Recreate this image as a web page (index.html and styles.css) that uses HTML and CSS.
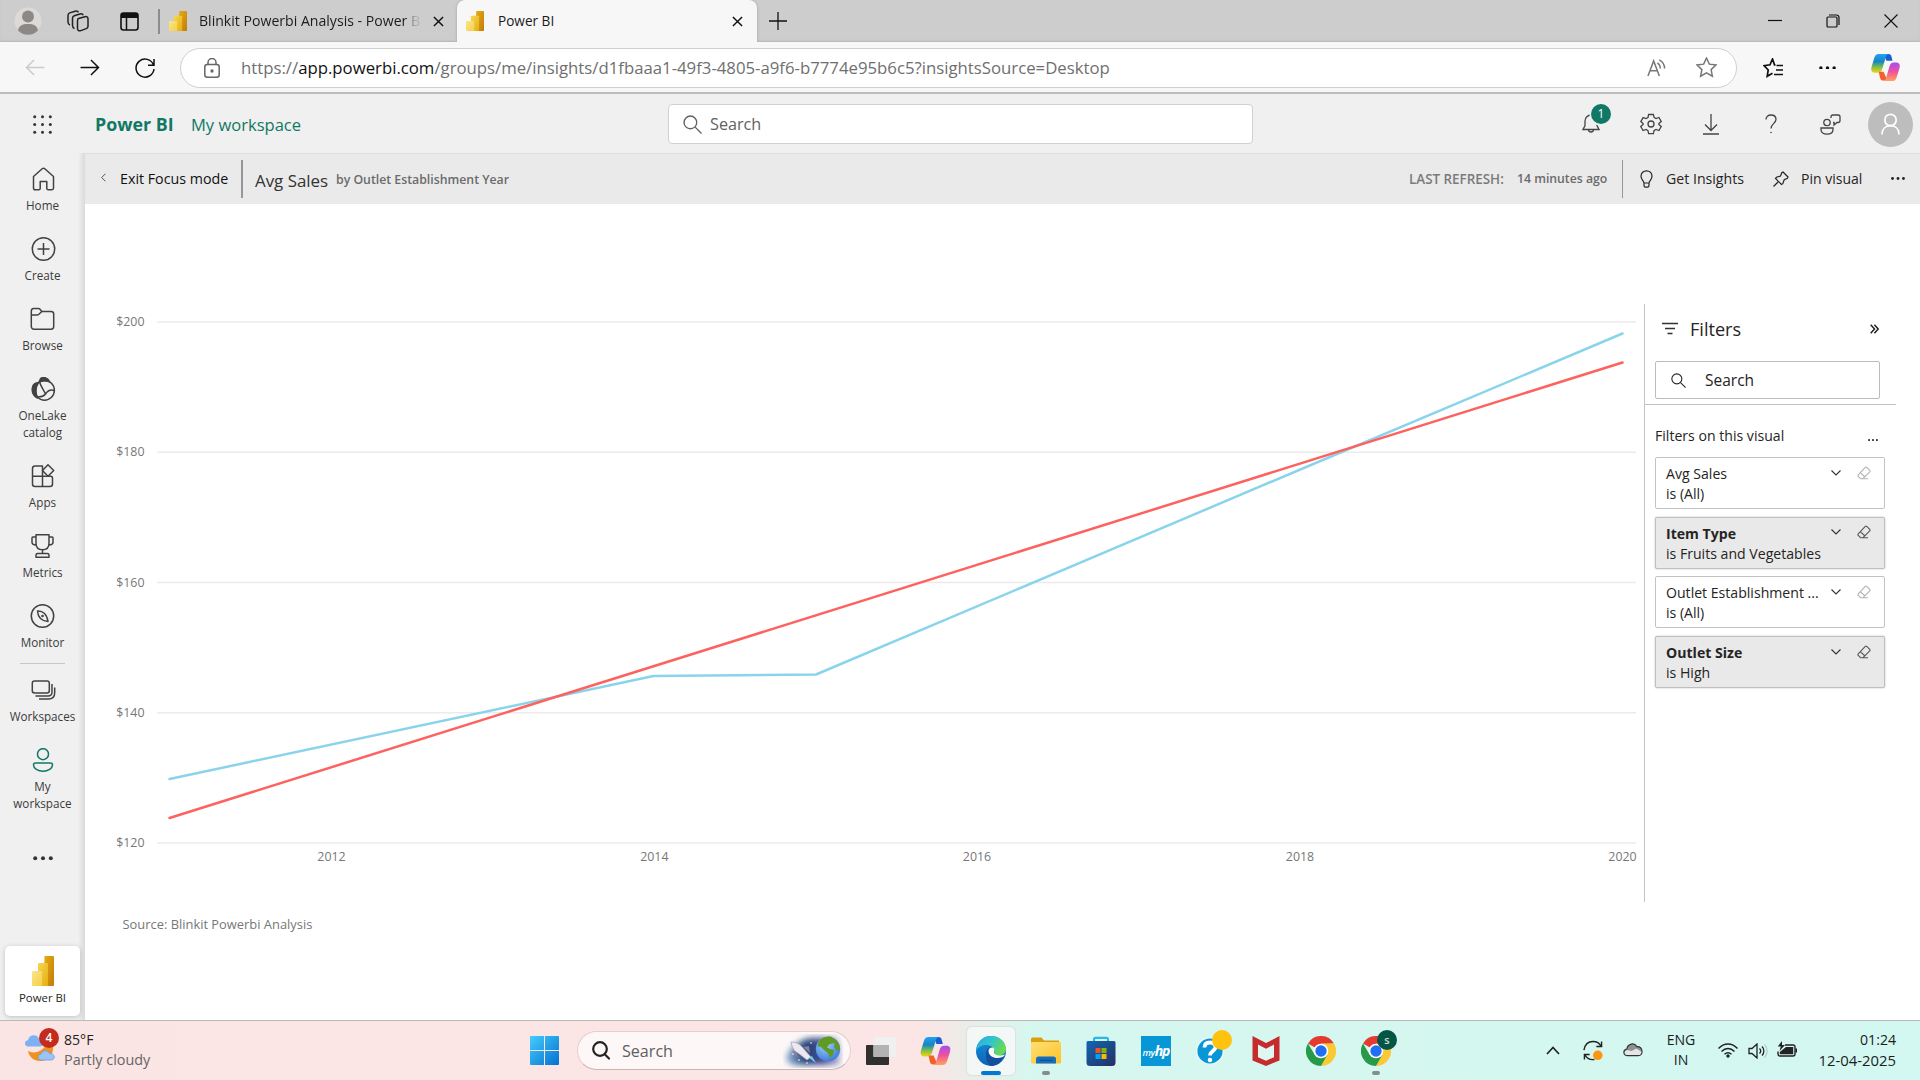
FILE: index.html
```html
<!DOCTYPE html>
<html lang="en">
<head>
<meta charset="utf-8">
<title>Power BI</title>
<link rel="stylesheet" href="styles.css">
</head>
<body>
<svg class="defs" width="0" height="0" aria-hidden="true">
  <defs>
    <linearGradient id="bar3" x1="0" y1="0" x2="1" y2="1"><stop offset="0" stop-color="#e6ad10"/><stop offset="1" stop-color="#c27b0b"/></linearGradient>
    <linearGradient id="bar2" x1="0" y1="0" x2="1" y2="1"><stop offset="0" stop-color="#f6d751"/><stop offset="1" stop-color="#e6ad10"/></linearGradient>
    <linearGradient id="bar1" x1="0" y1="0" x2="1" y2="1"><stop offset="0" stop-color="#f9e589"/><stop offset="1" stop-color="#f4d04b"/></linearGradient>
    <linearGradient id="cpLeft" x1="0" y1="0" x2="0" y2="1"><stop offset="0" stop-color="#1fa3f2"/><stop offset=".4" stop-color="#1785c4"/><stop offset=".7" stop-color="#7fbf4a"/><stop offset="1" stop-color="#f8d30c"/></linearGradient>
    <linearGradient id="cpRight" x1="0" y1="0" x2="0" y2="1"><stop offset="0" stop-color="#a44ef0"/><stop offset=".5" stop-color="#f0529c"/><stop offset="1" stop-color="#ffa35c"/></linearGradient>
    <linearGradient id="edgeTop" x1="0" y1="0" x2="1" y2=".5"><stop offset="0" stop-color="#2ba9e4"/><stop offset=".5" stop-color="#31c3cf"/><stop offset="1" stop-color="#68dc4d"/></linearGradient>
    <linearGradient id="edgeBody" x1="0" y1="0" x2="0" y2="1"><stop offset="0" stop-color="#1593dc"/><stop offset="1" stop-color="#0f62ba"/></linearGradient>
    <linearGradient id="win" x1="0" y1="0" x2="1" y2="1"><stop offset="0" stop-color="#45cdfb"/><stop offset="1" stop-color="#0470d2"/></linearGradient>
    <linearGradient id="store" x1="0" y1="0" x2="1" y2="1"><stop offset="0" stop-color="#1266b4"/><stop offset="1" stop-color="#252f63"/></linearGradient>
    <linearGradient id="folder" x1="0" y1="0" x2="1" y2="1"><stop offset="0" stop-color="#ffdf72"/><stop offset="1" stop-color="#fcc32b"/></linearGradient>
    <linearGradient id="space" x1="0" x2="1"><stop offset="0" stop-color="#9ab6d8"/><stop offset=".35" stop-color="#1f4479"/><stop offset=".7" stop-color="#4a4c90"/><stop offset="1" stop-color="#b9b7dc"/></linearGradient>
    <radialGradient id="earth" cx=".4" cy=".35" r=".7"><stop offset="0" stop-color="#9cd0f8"/><stop offset="1" stop-color="#3b78dd"/></radialGradient>
    <filter id="soft" x="-20%" y="-30%" width="140%" height="160%"><feGaussianBlur stdDeviation="3"/></filter>
    <symbol id="pbi" viewBox="0 0 22 30" preserveAspectRatio="none">
      <path fill="url(#bar3)" d="M12.500 0H21a1 1 0 0 1 1 1v28a1 1 0 0 1-1 1H12z"/>
      <path fill="url(#bar2)" d="M7 7h8a1 1 0 0 1 1 1v22H6V8a1 1 0 0 1 1-1z"/>
      <path fill="url(#bar1)" d="M1 15h8a1 1 0 0 1 1 1v14H1a1 1 0 0 1-1-1V16a1 1 0 0 1 1-1z"/>
    </symbol>
    <symbol id="copilot" viewBox="0 0 30 28">
      <path fill="#1b5bd6" d="M13 0h5c2 0 2.700 1 3.300 3l1 4H16z"/>
      <path fill="url(#cpLeft)" d="M8 0h11c-2 0-3 1-3.600 3l-4 13c-.7 2.300-2 3.500-4.500 3.500H4C.5 19.500-.4 17 .5 13.500L3.400 4C4.300 1.200 5.500 0 8 0z"/>
      <path fill="#f4602c" d="M8 18.500h5l4 9h-4c-2.500 0-3-.8-3.700-3z"/>
      <path fill="url(#cpRight)" d="M22 28H12c2 0 3-1 3.600-3l3.600-12.500c.7-2.300 2-3.800 4.500-3.800H26c3.500 0 4.400 2.500 3.500 6L26.600 24c-.9 2.800-2.100 4-4.600 4z"/>
    </symbol>
    <symbol id="chrome" viewBox="0 0 30 30">
      <path fill="#e33b2e" d="M15 15 2 7.500A15 15 0 0 1 28 7.500L15 8z"/>
      <path fill="#fcc934" d="M28 7.500A15 15 0 0 1 15 30l6.200-11.500L15 7.500z"/>
      <path fill="#269a49" d="M2 7.500A15 15 0 0 0 15 30l6.400-11.200L15 15 8.700 18.800z"/>
      <circle cx="15" cy="15" r="7.300" fill="#fff"/><circle cx="15" cy="15" r="5.700" fill="#1f6ff0"/>
    </symbol>
    <symbol id="search" viewBox="0 0 18 18"><g fill="none" stroke="currentColor" stroke-width="1.300"><circle cx="7" cy="7" r="6"/><path d="m11.500 11.500 6 6"/></g></symbol>
    <symbol id="down" viewBox="0 0 10 6"><path fill="none" stroke="currentColor" stroke-width="1.100" d="m.5.5 4.500 4.500L9.500.5"/></symbol>
    <symbol id="eraser" viewBox="0 0 14 14"><path fill="none" stroke="currentColor" stroke-width="1.100" stroke-linejoin="round" d="M1 9.200 8.500 1.200h1L13 4.700v1L6 12.700H3.500L1 10.200zM3.500 6.800l4.500 4.200M6 12.700h5"/></symbol>
    <symbol id="close" viewBox="0 0 12 12"><path fill="none" stroke="currentColor" stroke-width="1.600" d="m1 1 10 10M11 1 1 11"/></symbol>
    <symbol id="dots" viewBox="0 0 20 4"><g fill="currentColor"><circle cx="2.200" cy="2" r="2"/><circle cx="10" cy="2" r="2"/><circle cx="17.800" cy="2" r="2"/></g></symbol>
  </defs>
</svg>

<header class="tabs">
  <svg class="profile" viewBox="0 0 28 28"><circle cx="14" cy="14" r="13.500" fill="#dcdad6"/><circle cx="14" cy="9.500" r="6" fill="#8b8885"/><path fill="#8b8885" d="M4 23.500c1-5 4-6.500 10-6.500s9 1.500 10 6.500A14 14 0 0 1 4 23.500z"/></svg>
  <svg class="collections" viewBox="0 0 22 22" fill="none" stroke="#222" stroke-width="1.500" stroke-linejoin="round"><path d="M11.500 8.500 18 6.700c1.500-.4 3 .3 3 2v7.500c0 1.300-.6 2-1.700 2.400l-5.500 2c-1.800.6-3.300 0-3.300-2v-7.500c0-1.500 0-2.200 1-2.600z"/><path d="M7.500 18.500C6 18 5.500 17 5.500 15.500V8.300c0-1.400.5-2.200 1.700-2.600L13 4c1.500-.4 2.700 0 3.200 1.200M3 15C1.500 14.500 1 13.500 1 12V5.500c0-1.400.5-2.200 1.700-2.600l5.500-1.700c1.500-.4 2.700 0 3.200 1.200"/></svg>
  <svg class="tab-actions" viewBox="0 0 19 19"><rect x="1" y="1" width="17" height="17" rx="2.500" fill="none" stroke="#111" stroke-width="1.600"/><path fill="#111" d="M1 3.500A2.500 2.500 0 0 1 3.500 1h12A2.500 2.500 0 0 1 18 3.500V6H1z"/><path stroke="#111" stroke-width="1.500" d="M6.500 5v13"/></svg>
  <i class="tab-divider"></i>
  <svg class="tab-logo"><use href="#pbi"/></svg>
  <span class="tab-title fade">Blinkit Powerbi Analysis - Power B</span>
  <svg class="tab-close first"><use href="#close"/></svg>
  <div class="tab-active">
    <svg class="tab-logo"><use href="#pbi"/></svg>
    <span class="tab-title second">Power BI</span>
    <svg class="tab-close"><use href="#close"/></svg>
  </div>
  <svg class="new-tab" viewBox="0 0 18 18" stroke="#111" stroke-width="1.300"><path d="M9 0v18M0 9h18"/></svg>
  <div class="window-buttons">
    <svg width="14" height="14" stroke="#111" stroke-width="1.200"><path d="M0 6.500h14"/></svg>
    <svg width="14" height="14" fill="none" stroke="#111" stroke-width="1.200"><rect x="1" y="3" width="10" height="10" rx="1"/><path d="M3 1h7.500A2.500 2.500 0 0 1 13 3.500V11"/></svg>
    <svg width="14" height="14" stroke="#111" stroke-width="1.100"><path d="m.5.500 13 13M13.500.5l-13 13"/></svg>
  </div>
</header>

<nav class="toolbar">
  <svg class="back" viewBox="0 0 20 18"><path d="M20 9H1M9 1 1 9l8 8"/></svg>
  <svg class="forward" viewBox="0 0 20 18"><path d="M0 9h19M11 1l8 8-8 8"/></svg>
  <svg class="refresh" viewBox="0 0 20 20"><path d="M18.500 7A9 9 0 1 0 19 11M19 1v6.200h-6"/></svg>
  <div class="address">
    <svg class="lock" viewBox="0 0 16 20"><rect x=".8" y="6.500" width="14.400" height="12.700" rx="2.500"/><path d="M4 6.500V4.500a4 4 0 0 1 8 0v2"/><circle cx="8" cy="13" r=".9" fill="#555"/></svg>
    <span class="url">https://<b>app.powerbi.com</b>/groups/me/insights/d1fbaaa1-49f3-4805-a9f6-b7774e95b6c5?insightsSource=Desktop</span>
    <svg class="read" viewBox="0 0 20 18"><path d="m1 17.500 6-16 6 16M3 12h8M11 3.500c2 1.500 3 3.500 3 6M13 .5c3.500 2 5.500 5 5.500 9"/></svg>
    <svg class="star" viewBox="0 0 20 20"><path d="m10 1 2.700 5.800 6.300.8-4.600 4.400 1.200 6.300L10 15.200l-5.600 3.100L5.600 12 1 7.600l6.300-.8z"/></svg>
  </div>
  <svg class="favorites" viewBox="0 0 21 20"><path d="M12.500 6.800h-1L9.500 1 7 6.800l-6 .8L5.200 12l-1 6.300L9.500 15.200M13.500 7.500H20M13 12h7M11 16.500h9"/></svg>
  <svg class="more"><use href="#dots"/></svg>
  <svg class="copilot"><use href="#copilot"/></svg>
</nav>

<div class="app-header">
  <svg class="waffle" viewBox="0 0 19 19" fill="#333"><circle cx="1.700" cy="1.700" r="1.500"/><circle cx="9.500" cy="1.700" r="1.500"/><circle cx="17.300" cy="1.700" r="1.500"/><circle cx="1.700" cy="9.500" r="1.500"/><circle cx="9.500" cy="9.500" r="1.500"/><circle cx="17.300" cy="9.500" r="1.500"/><circle cx="1.700" cy="17.300" r="1.500"/><circle cx="9.500" cy="17.300" r="1.500"/><circle cx="17.300" cy="17.300" r="1.500"/></svg>
  <span class="brand">Power BI</span>
  <span class="crumb">My workspace</span>
  <div class="app-search"><svg><use href="#search"/></svg><span>Search</span></div>
  <div class="bell">
    <svg viewBox="0 0 18 20"><path d="M9 1a6 6 0 0 0-6 6v4.500L1 15.500h16l-2-4V7a6 6 0 0 0-6-6zM6.500 15.500a2.500 2.500 0 0 0 5 0"/></svg>
    <span class="badge">1</span>
  </div>
  <svg class="gear" viewBox="0 0 22 22"><path d="m8.600 1.500-.6 3-2 1.100-2.900-1-2.300 4L3.100 10.500v1L.8 13.500l2.300 4 2.900-1 2 1.100.6 3h4.800l.6-3 2-1.100 2.900 1 2.300-4-2.300-2v-1l2.300-2-2.300-4-2.900 1-2-1.100-.6-3z"/><circle cx="11" cy="11" r="3"/></svg>
  <svg class="download" viewBox="0 0 16 21"><path d="M8 0v16M2 10.500l6 6 6-6M0 20h16"/></svg>
  <svg class="help" viewBox="0 0 12 20"><path d="M1 5.500C1 2.700 3 1 6 1s5 1.700 5 4.500c0 3.500-5 4.500-5 9"/><circle cx="6" cy="18.500" r=".8" fill="#444" stroke="none"/></svg>
  <svg class="feedback" viewBox="0 0 21 21"><circle cx="7" cy="8.500" r="3.200"/><path d="M1 14h12v1.500c0 3-2.500 4.700-6 4.700s-6-1.700-6-4.700zM11 4V2.800C11 1.700 11.700 1 12.800 1H18c1.200 0 2 .8 2 1.800v4c0 1-.8 1.700-2 1.700h-1l-3 2.500V8.500h-1"/></svg>
  <svg class="avatar" viewBox="0 0 45 45"><circle cx="22.500" cy="22.500" r="22.500" fill="#bdbdbd"/><g fill="none" stroke="#fff" stroke-width="1.700"><circle cx="22.500" cy="18" r="5.700"/><path d="M14 32.500c0-5.500 3.500-8.800 8.500-8.800s8.500 3.300 8.500 8.800"/></g></svg>
</div>

<div class="workspace">
  <aside class="rail">
    <div class="rail-item"><svg viewBox="0 0 24 24"><path d="M2 9.500 10.700 1.800a2 2 0 0 1 2.600 0L22 9.500V21a1.800 1.800 0 0 1-1.800 1.800h-3.400A1.500 1.500 0 0 1 15.300 21v-6.500H8.700V21a1.500 1.500 0 0 1-1.500 1.800H3.800A1.800 1.800 0 0 1 2 21z"/></svg><span>Home</span></div>
    <div class="rail-item"><svg viewBox="0 0 24 24"><circle cx="12" cy="12" r="11.200"/><path d="M12 6v12M6 12h12"/></svg><span>Create</span></div>
    <div class="rail-item"><svg viewBox="0 0 24 24"><path d="M.8 4.500C.8 2.500 1.500 1.500 3 1.500h5c2 0 2.500 2.500 3.500 3h9c1.500 0 2.700 1 2.700 2.500v12.500c0 1.500-1.200 2.700-2.700 2.700h-17C2 22.200.8 21 .8 19.500zM.8 8H7c2.500 0 2.500-3 4.500-3.500"/></svg><span>Browse</span></div>
    <div class="rail-item"><svg viewBox="0 0 24 24"><circle cx="13" cy="13.300" r="9.900"/><path fill="#424242" d="M8 4C9 1 11 0 13 .6c2.500.4 4 1.500 5 4-4-1.500-6-1.500-10 .4zM7 5.500C2 6 .5 9 .7 13c.2 4 2 6.500 5.300 8C4 16 4 10 7 5.500z"/><path d="M8 5c2 6 5 9 6 12 2-3 4-5 8.500-3.500M5 19.500c3 .5 7 .5 9-2.500"/></svg><span>OneLake<br>catalog</span></div>
    <div class="rail-item"><svg viewBox="0 0 24 24"><path d="M2 4.500C2 3 2.700 2 4.500 2H12v20.500H4.500C3 22.500 2 21.500 2 20zM2 12.200h18c1.200 0 2 .8 2 2V20c0 1.500-1 2.500-2.500 2.500H12"/><path d="m17.500.8 5.700 5.700-5.700 5.700L12 6.500z"/></svg><span>Apps</span></div>
    <div class="rail-item"><svg viewBox="0 0 24 24"><path d="M5.500.8h13v8.500c0 4-2.500 6.500-6.500 6.500s-6.500-2.500-6.500-6.500zM5.500 3H2.300C1.500 3 1.500 3.500 1.500 4v4c0 2 1 3 4 3M18.500 3h3.200c.8 0 .8.500.8 1v4c0 2-1 3-4 3M12 16v3.500M5.500 23.200v-2c0-1 .8-1.700 1.700-1.700h9.600c1 0 1.700.7 1.700 1.700v2z"/></svg><span>Metrics</span></div>
    <div class="rail-item"><svg viewBox="0 0 24 24"><circle cx="12" cy="12" r="11.200"/><path d="M7 7c5-.5 9.500 3 10.500 10.500C12 17 7.500 14 7 7z"/><circle cx="12" cy="12" r=".6"/></svg><span>Monitor</span></div>
    <hr>
    <div class="rail-item"><svg viewBox="0 0 24 24"><rect x=".8" y="3" width="17" height="12" rx="2.200"/><path d="M4 18h12.500c2.500 0 4-1.500 4-4V6M7.500 21H17c4 0 6.200-2.500 6.200-6.500V9.500"/></svg><span>Workspaces</span></div>
    <div class="rail-item current"><svg viewBox="0 0 24 24"><circle cx="12.500" cy="6.200" r="5.500"/><path d="M5 15h15c1.300 0 2 .8 2 1.900 0 3.600-4.500 6.300-9.500 6.300S3 20.500 3 16.900c0-1.100.7-1.900 2-1.900z"/></svg><span>My<br>workspace</span></div>
    <svg class="rail-more"><use href="#dots"/></svg>
    <div class="rail-app"><svg><use href="#pbi"/></svg><span>Power BI</span></div>
  </aside>

  <main>
    <div class="focus-bar">
      <svg class="chevron" viewBox="0 0 6 10"><path d="M5.300.5.8 5l4.500 4.500"/></svg>
      <span class="exit">Exit Focus mode</span>
      <i class="bar-divider"></i>
      <span class="measure">Avg Sales</span>
      <span class="by">by Outlet Establishment Year</span>
      <span class="last">LAST REFRESH:</span>
      <span class="ago">14 minutes ago</span>
      <i class="bar-divider thin"></i>
      <svg class="bulb" viewBox="0 0 13 18"><path d="M4 13C3.500 10.500 1 9.500 1 6.200 1 3 3.500.8 6.500.8S12 3 12 6.200c0 3.300-2.500 4.300-3 6.800zM4 13v2.500c0 1 .8 1.700 1.500 1.700h2c.8 0 1.500-.7 1.500-1.700V13"/></svg>
      <span class="insights">Get Insights</span>
      <svg class="pin" viewBox="0 0 16 16"><path d="M.5 15.500 5 11M10 1l5 5-.6 1.400-3.200 1.300-1.400 4L8.500 13.500 2.500 7.500l1-1.200 4-1.300 1.300-3.300z"/></svg>
      <span class="pin-label">Pin visual</span>
      <svg class="bar-more"><use href="#dots"/></svg>
    </div>

    <div class="canvas">
      <section class="visual">
        <svg class="chart" viewBox="0 0 1559 598">
          <g stroke="#ebebeb" stroke-width="1.600"><path d="M72 18h1479M72 148.200h1479M72 278.500h1479M72 408.800h1479M72 539h1479"/></g>
          <g class="axis" text-anchor="end"><text x="59.500" y="22">$200</text><text x="59.500" y="152.200">$180</text><text x="59.500" y="282.500">$160</text><text x="59.500" y="412.800">$140</text><text x="59.500" y="543">$120</text></g>
          <g class="axis" text-anchor="middle"><text x="246.500" y="557">2012</text><text x="569.300" y="557">2014</text><text x="892" y="557">2016</text><text x="1215" y="557">2018</text><text x="1537.500" y="557">2020</text></g>
          <g fill="none" stroke-width="2.500" stroke-linecap="round" stroke-linejoin="round">
            <path stroke="#8ad4eb" d="M84.500 475 568.500 372 731 370.500 1215.300 165.500 1537.500 29.500"/>
            <path stroke="#fd625e" d="M84.500 514 1537.500 58.500"/>
          </g>
        </svg>
        <p class="source">Source: Blinkit Powerbi Analysis</p>
      </section>

      <section class="filters">
        <div class="filters-head">
          <svg class="funnel" viewBox="0 0 16 13"><path d="M0 1.500h16M3 6.500h10M5.500 11.500h5"/></svg>
          <h2>Filters</h2>
          <svg class="collapse" viewBox="0 0 9 10"><path d="m.7.700 3.800 4.300L.7 9.300M4.400.7 8.200 5 4.400 9.300"/></svg>
        </div>
        <div class="filters-search"><svg><use href="#search"/></svg><span>Search</span></div>
        <div class="filters-sub"><span>Filters on this visual</span><svg><use href="#dots"/></svg></div>
        <div class="card"><div><span>Avg Sales</span><svg class="down"><use href="#down"/></svg><svg class="erase"><use href="#eraser"/></svg></div><p>is (All)</p></div>
        <div class="card on"><div><span>Item Type</span><svg class="down"><use href="#down"/></svg><svg class="erase"><use href="#eraser"/></svg></div><p>is Fruits and Vegetables</p></div>
        <div class="card"><div><span>Outlet Establishment ...</span><svg class="down"><use href="#down"/></svg><svg class="erase"><use href="#eraser"/></svg></div><p>is (All)</p></div>
        <div class="card on"><div><span>Outlet Size</span><svg class="down"><use href="#down"/></svg><svg class="erase"><use href="#eraser"/></svg></div><p>is High</p></div>
      </section>
    </div>
  </main>
</div>

<footer class="taskbar">
  <svg class="weather" viewBox="0 0 32 32"><path fill="#f0921e" d="M4 19c5 3 14 1 17-5h8c1 9-5 15-13 15-6 0-11-4-12-10z"/><path fill="#7fb0f3" d="M4 14.500c-4-.3-4-6 0-6.300 1-6 9-6.500 11-1.500 5-.5 6 7.500 1 7.800z"/><path fill="#9cc3f8" stroke="#6d9ae3" stroke-width=".8" d="M17 28c-4-.3-4-5.500 0-5.800 1.500-4.500 7-4.500 8.500-.7 6-.2 6 6.300 2 6.500z"/></svg>
  <span class="alerts">4</span>
  <div class="temp"><span>85°F</span><span>Partly cloudy</span></div>
  <svg class="start" viewBox="0 0 29 29"><path fill="url(#win)" d="M1 0h13v14H0V1a1 1 0 0 1 1-1zM15 0h13a1 1 0 0 1 1 1v13H15zM0 15h14v14H1a1 1 0 0 1-1-1zM15 15h14v13a1 1 0 0 1-1 1H15z"/></svg>
  <div class="task-search">
    <svg class="glass" viewBox="0 0 18 19"><g fill="none" stroke="#222" stroke-width="2.200"><circle cx="8" cy="8" r="6.800"/><path stroke-linecap="round" d="m13 13.500 4 4"/></g></svg>
    <span>Search</span>
    <svg class="scene" viewBox="0 0 60 34"><path fill="url(#space)" filter="url(#soft)" d="M3 27C2 16 18 4 30 4h22c6 2 6 22 4 27H10z"/><circle cx="45" cy="15" r="12.200" fill="url(#earth)"/><path fill="#5f9a22" d="M36 7c3-4 8-5 12-4.500l4 3-2 3.500-4 1.500-2 3 3 1.500 4 1-1 5-3 3-2-5-4-3-3-3-3.500-1zM50 4c4 2 7 6 7 11l-3 2-3-4 1-3-3-2z"/><path fill="#ede8f0" stroke="#aaa2bb" stroke-width=".8" d="M8 8c5 0 9 2 12 6l8 9-4 3-9-7C11 17 9 14 8 8z"/><path fill="#877da0" d="m12 17-3 2 7 5zM20 13l6-1 1 7z"/><path fill="#79c5ee" d="m26 24 3-2 4 7z"/><g fill="#fff"><circle cx="10" cy="20" r=".8"/><circle cx="16" cy="26" r=".8"/><circle cx="28" cy="9" r=".8"/><circle cx="24" cy="29" r=".8"/></g></svg>
  </div>
  <svg class="task-view" viewBox="0 0 30 28"><rect y="8" width="23" height="20" rx="1" fill="#30302e"/><rect x="7.500" width="22.500" height="20" rx="1" fill="#f1f0f0"/><path fill="#b4b3b2" d="M7.500 8H23v12H7.500z"/></svg>
  <svg class="task-copilot"><use href="#copilot"/></svg>
  <div class="task-app active"><svg viewBox="0 0 30 30"><circle cx="15" cy="15" r="15" fill="url(#edgeBody)"/><path fill="#124f9d" d="M10 18c0-5 4-8 6-7-3 4 1 9 6 9 3 0 5-1 6-.5C26 26 21 30 15 30c-4-2-5-7-5-12z"/><path fill="url(#edgeTop)" d="M0 15C1 6 7 0 15 0c9 0 15 6 15 13 0 6-7 8-11 6-2-1 0-2-.5-4C18 8 5 6 0 15z"/><path fill="#f6f8f7" d="M12.500 15c0-2.500 2-4 4-3.500 2.500.8 2 3 1.500 5 0 2.500 5 4 11 2-2 4-8 4-11 3-3.500-1-5.500-3.500-5.500-6.500z"/></svg><i></i></div>
  <div class="task-app"><svg viewBox="0 0 30 30"><path fill="#db9f0c" d="M0 3a1.500 1.500 0 0 1 1.500-1.500h9L13 4.500h15V12H0z"/><rect y="6" width="30" height="21.500" rx="1.200" fill="url(#folder)"/><path fill="#156fbe" d="M5 27.500V23a2.500 2.500 0 0 1 2.500-2.500h15A2.500 2.500 0 0 1 25 23v4.500z"/><path stroke="#0c4f94" stroke-width="1.200" d="M8.500 24.300h13"/></svg><i></i></div>
  <div class="task-app"><svg viewBox="0 0 30 30"><path fill="none" stroke="#28b8ee" stroke-width="2.200" d="M8 7V3.300c0-.9.600-1.500 1.500-1.500h11c.9 0 1.500.6 1.500 1.500V7"/><path fill="url(#store)" d="M.5 6.500A1.500 1.500 0 0 1 2 5h26a1.500 1.500 0 0 1 1.500 1.500v20A3.500 3.500 0 0 1 26 30H4a3.500 3.500 0 0 1-3.500-3.500z"/><path fill="#f25022" d="M9.500 12h5v5h-5z"/><path fill="#7fba00" d="M15.500 12h5v5h-5z"/><path fill="#00a4ef" d="M9.500 18h5v5h-5z"/><path fill="#ffb900" d="M15.500 18h5v5h-5z"/></svg></div>
  <div class="task-app"><span class="myhp"><small>my</small>hp</span></div>
  <div class="task-app"><svg viewBox="0 0 30 30"><circle cx="14" cy="15" r="13.300" fill="#0796d6" stroke="#eaf7fa" stroke-width="1.500"/><path fill="none" stroke="#fff" stroke-width="3.800" d="M8.500 11.500c0-3 2-5 5.500-5s5.500 1.800 5.500 4.500c0 4-5.500 4-5.500 8.500"/><circle cx="14" cy="24" r="2.300" fill="#fff"/></svg><b class="dot-yellow"></b></div>
  <div class="task-app"><svg viewBox="0 0 30 30"><path fill="#c62b2e" d="m1.500 0 13.500 7L28.500 0v24.500L15 30 1.500 24.500z"/><path fill="#dff6f1" d="m7 8.500 8 4.300 8-4.300v12.700L15 24.800 7 21.200z"/></svg></div>
  <div class="task-app"><svg><use href="#chrome"/></svg></div>
  <div class="task-app"><svg><use href="#chrome"/></svg><b class="dot-green">s</b><i></i></div>
  <div class="tray">
    <svg class="t-up" viewBox="0 0 14 9"><path fill="none" stroke="#222" stroke-width="1.700" d="m1 8 6-6.500L13 8"/></svg>
    <svg class="t-sync" viewBox="0 0 21 21"><path fill="none" stroke="#222" stroke-width="1.500" d="M1 10C2 4 6 1 10.500 1c4 0 7 2 8.500 5M19.500 1v5.300H14M12 20c-4 .5-8-1-10-5M1.500 20v-5.300H7"/><circle cx="15.500" cy="15.500" r="5" fill="#fb970e"/></svg>
    <svg class="t-cloud" viewBox="0 0 21 15"><path fill="#909191" d="M5 14C0 14-.5 8 4 7 5 1 12 0 14.500 4.500 21 4 22 14 16 14z"/><path fill="#e3e6e6" d="M3 14c-3-2-2-5 1.500-6L9 9l5-2.500L20 10c0 2-1 4-3 4z"/><path fill="none" stroke="#333" stroke-width="1.200" d="M5 14C0 14-.5 8 4 7 5 1 12 0 14.500 4.500 21 4 22 14 16 14z"/></svg>
    <div class="t-lang"><span>ENG</span><span>IN</span></div>
    <svg class="t-wifi" viewBox="0 0 20 15"><g fill="none" stroke="#222" stroke-width="1.400"><path d="M.5 5.500c5.500-6 13.500-6 19 0M3.500 8.500c4-4 9-4 13 0M6.500 11.300c2.200-2 4.800-2 7 0"/></g><circle cx="10" cy="13" r="1.700" fill="#222"/></svg>
    <svg class="t-vol" viewBox="0 0 20 16"><path fill="none" stroke="#222" stroke-width="1.300" d="M1 5.500h3L9 1v14l-5-4.500H1zM11.500 5.500c1.500 1.500 1.500 3.500 0 5M14 3.500c2.500 2.500 2.500 6.500 0 9"/><path fill="none" stroke="#b3cfca" stroke-width="1.300" d="M16.500 1.500c3.500 3.500 3.500 9.500 0 13"/></svg>
    <svg class="t-bat" viewBox="0 0 21 16"><path fill="none" stroke="#222" stroke-width="1.400" d="M8 4h8a2 2 0 0 1 2 2v7a2 2 0 0 1-2 2H3a2 2 0 0 1-2-2v-2.500"/><path fill="#222" d="M9 6h7.200v7.200H2.800V11L9 6zM18.500 7.500h1.500v4h-1.500zM5 0 .8 5.500h3L2.500 10 8 4H5z"/></svg>
    <div class="t-clock"><span>01:24</span><span class="date">12-04-2025</span></div>
  </div>
</footer>
</body>
</html>
```
FILE: styles.css
```css
* { box-sizing: border-box; }
body {
  margin: 0; width: 1920px; height: 1080px; overflow: hidden;
  display: flex; flex-direction: column;
  font-family: "Open Sans", "Noto Sans", sans-serif;
  font-size: 14px; color: #252423; background: #fff;
}
svg { display: block; flex: none; }
span { white-space: nowrap; }
p, h2 { margin: 0; font-weight: 400; }
.defs { position: absolute; }

/* browser tab strip */
.tabs { height: 42px; flex: none; display: flex; align-items: center; background: #cdcdcd; box-shadow: inset 0 -2px 2px -1px #b5b5b5; }
.profile { width: 28px; height: 28px; margin-left: 14px; }
.collections { width: 22px; height: 22px; margin-left: 25px; }
.tab-actions { width: 19px; height: 19px; margin-left: 31px; }
.tab-divider { width: 1.500px; height: 25px; margin-left: 19px; background: #8c8c8c; }
.tab-logo { width: 18px; height: 20px; margin-left: 9px; }
.tab-title { font-size: 14.100px; color: #1b1b1b; margin-left: 12.500px; width: 221px; line-height: 20px; padding-bottom: 1px; }
.tab-title.fade { background: linear-gradient(90deg, #1b1b1b 93%, #b0b0b0 98%); -webkit-background-clip: text; background-clip: text; color: transparent; }
.tab-title.second { font-size: 13.600px; margin-left: 14px; }
.tab-close { width: 11px; height: 11px; color: #111; margin-top: 1px; }
.tab-close.first { margin-left: 13px; }
.tab-active { width: 300px; height: 42px; margin-left: 13px; padding-right: 14px; display: flex; align-items: center; background: #f7f7f7; border-radius: 8px 8px 0 0; box-shadow: 0 0 3px #a2a2a2; clip-path: inset(0 -4px 0 -4px); }
.tab-active .tab-close { margin-left: auto; }
.new-tab { width: 18px; height: 18px; margin-left: 12px; }
.window-buttons { margin-left: auto; margin-right: 22px; display: flex; gap: 44px; }

/* browser toolbar */
.toolbar { height: 52px; flex: none; display: flex; align-items: center; background: #f7f7f7; border-bottom: 2px solid #bdbdbd; padding-top: 1px; }
.toolbar path, .toolbar rect { vector-effect: non-scaling-stroke; }
.back, .forward, .refresh, .lock, .read, .star, .favorites { fill: none; stroke-width: 1.500px; }
.back { width: 20px; height: 17px; margin-left: 25px; stroke: #cbcbcb; }
.forward { width: 20px; height: 17px; margin-left: 35px; stroke: #111; }
.refresh { width: 20px; height: 20px; margin-left: 35px; stroke: #111; }
.address { width: 1557px; height: 40px; margin-left: 25px; display: flex; align-items: center; background: #fff; border: 1px solid #cfcfcf; border-radius: 20px; }
.lock { width: 16px; height: 20px; margin-left: 23px; stroke: #666; }
.url { width: 868px; margin-left: 21px; font-size: 16.760px; color: #6f6f6f; }
.url b { font-weight: 400; color: #111; }
.read { width: 19px; height: 18px; margin-left: 538px; stroke: #777; }
.star { width: 21px; height: 21px; margin-left: 30px; stroke: #777; }
.favorites { width: 21px; height: 20px; margin-left: 26px; stroke: #111; stroke-width: 1.700px; }
.more { width: 17px; height: 3.800px; margin-left: 35px; color: #111; }
.copilot { width: 29px; height: 27px; margin-left: 35px; }

/* Power BI header */
.app-header { height: 59px; flex: none; display: flex; align-items: center; background: #f0f0f0; padding-top: 1px; }
.app-header > svg:not(.waffle):not(.avatar), .bell svg { fill: none; stroke: #444; stroke-width: 1.300; }
.waffle { width: 19px; height: 19px; margin-left: 33px; }
.brand { width: 96px; margin-left: 43px; font-size: 17.850px; font-weight: 700; color: #117865; }
.crumb { width: 120px; font-size: 16.550px; color: #117865; }
.app-search { width: 585px; height: 40px; margin-left: 357px; padding-left: 14px; display: flex; align-items: center; gap: 8px; background: #fff; border: 1px solid #d1d1d1; border-radius: 4px; font-size: 16.200px; color: #616161; }
.app-search svg { width: 19px; height: 19px; }
.bell { position: relative; margin-left: 329px; }
.bell svg { width: 18px; height: 20px; }
.badge { position: absolute; left: 9px; top: -10px; width: 20px; height: 20px; border-radius: 50%; background: #117865; color: #fff; font-size: 12px; line-height: 20px; text-align: center; box-shadow: 0 0 0 1.500px #f0f0f0; }
.gear { width: 22px; height: 22px; margin-left: 40px; }
.download { width: 16px; height: 21px; margin-left: 41px; }
.help { width: 12px; height: 20px; margin-left: 46px; }
.feedback { width: 21px; height: 21px; margin-left: 43px; }
.avatar { width: 45px; height: 45px; margin-left: 27px; }

.workspace { flex: 1; min-height: 0; display: flex; background: #f0f0f0; }

/* left rail */
.rail { width: 85px; flex: none; padding-top: 2px; display: flex; flex-direction: column; align-items: center; background: linear-gradient(90deg, #f0f0f0 78px, #dadada 85px); }
.rail-item { padding: 12px 0 11px; display: flex; flex-direction: column; align-items: center; gap: 6px; color: #3b3b3b; font-size: 11.700px; line-height: 17px; text-align: center; }
.rail-item svg { width: 25px; height: 24px; fill: none; stroke: #424242; stroke-width: 1.500; stroke-linejoin: round; margin-left: 1px; }
.rail-item.current svg { stroke: #117865; }
.rail hr { width: 45px; height: 1px; margin: 1px 0 2px; border: 0; background: #c7c7c7; flex: none; }
.rail-more { width: 20px; height: 4.500px; margin-top: 33px; color: #333; }
.rail-app { width: 75px; height: 70px; margin: auto 0 4px; padding-top: 10px; display: flex; flex-direction: column; align-items: center; gap: 3px; background: #fff; border-radius: 5px; box-shadow: 0 1px 5px #0003; font-size: 11.400px; line-height: 17px; }
.rail-app svg { width: 22px; height: 30px; }

main { flex: 1; min-width: 0; display: flex; flex-direction: column; background: #fff; }

/* focus mode bar */
.focus-bar { height: 51px; flex: none; display: flex; align-items: center; background: #eaeaea; box-shadow: inset 0 1px #dedede; }
.focus-bar span { line-height: 20px; }
.focus-bar > svg { fill: none; stroke: #252423; stroke-width: 1.200; }
.focus-bar .chevron { width: 5px; height: 9px; margin-left: 16px; margin-top: -2px; stroke: #555; }
.exit { width: 121px; margin-left: 14px; font-size: 14.250px; color: #111; }
.bar-divider { width: 2px; height: 38px; background: #979797; }
.bar-divider.thin { width: 1px; margin-left: 14px; }
.measure { width: 73px; margin-left: 12px; padding-top: 4px; font-size: 16.900px; color: #333; }
.by { margin-left: 8px; padding-top: 2px; font-size: 12.300px; font-weight: 600; color: #6b6b6b; }
.focus-bar .last { width: 97px; margin-left: auto; padding-top: 1px; font-size: 13.400px; font-weight: 600; color: #7a7a7a; }
.ago { width: 91px; margin-left: 11px; padding-top: 1px; font-size: 12.250px; font-weight: 600; color: #6b6b6b; }
.bulb { width: 13px; height: 18px; margin-left: 17px; }
.insights, .pin-label { padding-top: 1px; }
.insights { width: 80px; margin-left: 13px; font-size: 14.150px; }
.pin { width: 16px; height: 16px; margin-left: 27px; }
.pin-label { width: 63px; margin-left: 12px; font-size: 14px; }
.focus-bar .bar-more { width: 14px; height: 3px; margin-left: 27px; margin-right: 15px; stroke: none; }

.canvas { flex: 1; display: flex; padding-top: 100px; }

/* line chart */
.visual { width: 1559px; flex: none; }
.chart { width: 1559px; height: 598px; }
.axis { font-size: 12.400px; fill: #777; }
.source { margin: 12px 0 0 37.500px; font-size: 12.900px; line-height: 20px; color: #777; }

/* filter pane */
.filters { width: 252px; height: 598px; border-left: 1px solid #c3c3c3; }
.filters-head { height: 57px; padding: 0 17px 8px 17px; display: flex; align-items: center; }
.funnel { width: 16px; height: 13px; stroke: #333; stroke-width: 1.500; margin-top: -1px; }
.filters h2 { margin-left: 12px; font-size: 18.100px; line-height: 24px; }
.collapse { width: 9px; height: 10px; margin-left: auto; fill: none; stroke: #252423; stroke-width: 1.500; }
.filters-search { width: 225px; height: 38px; margin-left: 10px; padding-left: 15px; display: flex; align-items: center; gap: 19px; border: 1px solid #bcbcbc; border-radius: 2px; font-size: 15.500px; }
.filters-search svg { width: 15px; height: 15px; }
.filters-sub { margin-top: 5px; border-top: 1px solid #c3c3c3; padding: 21px 18px 0 10px; height: 53px; display: flex; justify-content: space-between; font-size: 14.100px; line-height: 20px; }
.filters-sub svg { width: 10px; height: 2.200px; margin-top: 13px; }
.card { width: 230px; height: 52px; margin: 0 0 7.700px 10px; padding: 6px 13px 0 10px; border: 1px solid #c3c3c3; border-radius: 2px; font-size: 14.100px; line-height: 20px; }
.card div { height: 20px; display: flex; align-items: center; }
.card .down { width: 10px; height: 6px; margin-left: auto; margin-right: 16px; margin-top: -3px; color: #333; }
.card .erase { width: 14px; height: 14px; color: #b5b3b1; margin-top: -3px; }
.card.on { background: #e9e9e9; border-color: #bfbfbf; box-shadow: 0 0 2px #bbb; }
.card.on .erase { color: #555; }
.card.on span { font-weight: 700; }

/* Windows taskbar */
.taskbar { height: 60px; flex: none; display: flex; align-items: center; border-top: 1px solid #b9b9b9; background: linear-gradient(90deg, #fae4e4 0, #fbe5e5 920px, #e6efe9 985px, #d6f7ef 1030px, #d3f7f1 100%); }
.weather { width: 32px; height: 32px; margin-left: 24px; margin-top: -6px; }
.alerts { width: 20px; height: 20px; margin-left: -17px; margin-top: -25px; border-radius: 50%; background: #c42b1c; color: #fff; font-size: 12px; font-weight: 600; line-height: 20px; text-align: center; z-index: 1; }
.temp { width: 466px; margin-left: 5px; padding-bottom: 1px; display: flex; flex-direction: column; font-size: 14.100px; line-height: 20px; color: #222; }
.temp span + span { color: #666; font-size: 14.400px; }
.start { width: 29px; height: 29px; }
.task-search { width: 274px; height: 39px; margin-left: 18px; padding: 0 7px 0 14px; display: flex; align-items: center; background: #fdf8f7; border: 1px solid #e4cfcf; border-bottom-color: #c9b5b5; border-radius: 20px; font-size: 16.100px; color: #5e5e5e; }
.task-search span { margin-left: 12px; }
.glass { width: 18px; height: 19px; }
.scene { width: 60px; height: 34px; margin-left: auto; }
.task-view { width: 30px; height: 28px; margin-left: 15px; }
.task-copilot { width: 31px; height: 28px; margin-left: 24px; margin-right: 16px; }
.task-app { position: relative; width: 48px; height: 48px; margin-right: 7px; display: grid; place-items: center; border-radius: 5px; }
.task-app svg { width: 30px; height: 30px; }
.task-app i { position: absolute; left: 20px; bottom: 0; width: 8px; height: 4px; border-radius: 2px; background: #838f8d; }
.task-app.active { background: #f3f8f6; box-shadow: 0 0 1px 1px #d9e2de; }
.task-app.active i { left: 14px; width: 20px; background: #0078d4; }
.myhp { width: 30px; height: 30px; background: #0796d6; color: #fff; font-size: 14px; font-weight: 700; font-style: italic; line-height: 29px; text-align: center; letter-spacing: -1px; }
.myhp small { font-size: 9.500px; font-weight: 600; letter-spacing: -.5px; }
.dot-yellow, .dot-green { position: absolute; right: 3px; top: 3px; width: 20px; height: 20px; border-radius: 50%; background: #ffc20e; }
.dot-green { background: #055546; color: #cfe0dc; font-size: 11px; line-height: 19px; text-align: center; font-weight: 600; }
.tray { margin-left: auto; margin-right: 24px; display: flex; align-items: center; color: #1d1d1d; font-size: 14.100px; line-height: 20px; }
.t-up { width: 14px; height: 9px; }
.t-sync { width: 20px; height: 21px; margin-left: 23px; }
.t-cloud { width: 20px; height: 15px; margin-left: 20px; margin-top: -3px; }
.t-lang { width: 40px; margin-left: 18px; text-align: center; display: flex; flex-direction: column; }
.t-wifi { width: 20px; height: 15px; margin-left: 17px; }
.t-vol { width: 20px; height: 16px; margin-left: 10px; }
.t-bat { width: 21px; height: 16px; margin-left: 9px; margin-top: -3px; }
.t-clock { width: 98px; display: flex; flex-direction: column; align-items: flex-end; }
.t-lang, .t-clock { padding-bottom: 1px; }
.date { font-size: 14.850px; }
```
